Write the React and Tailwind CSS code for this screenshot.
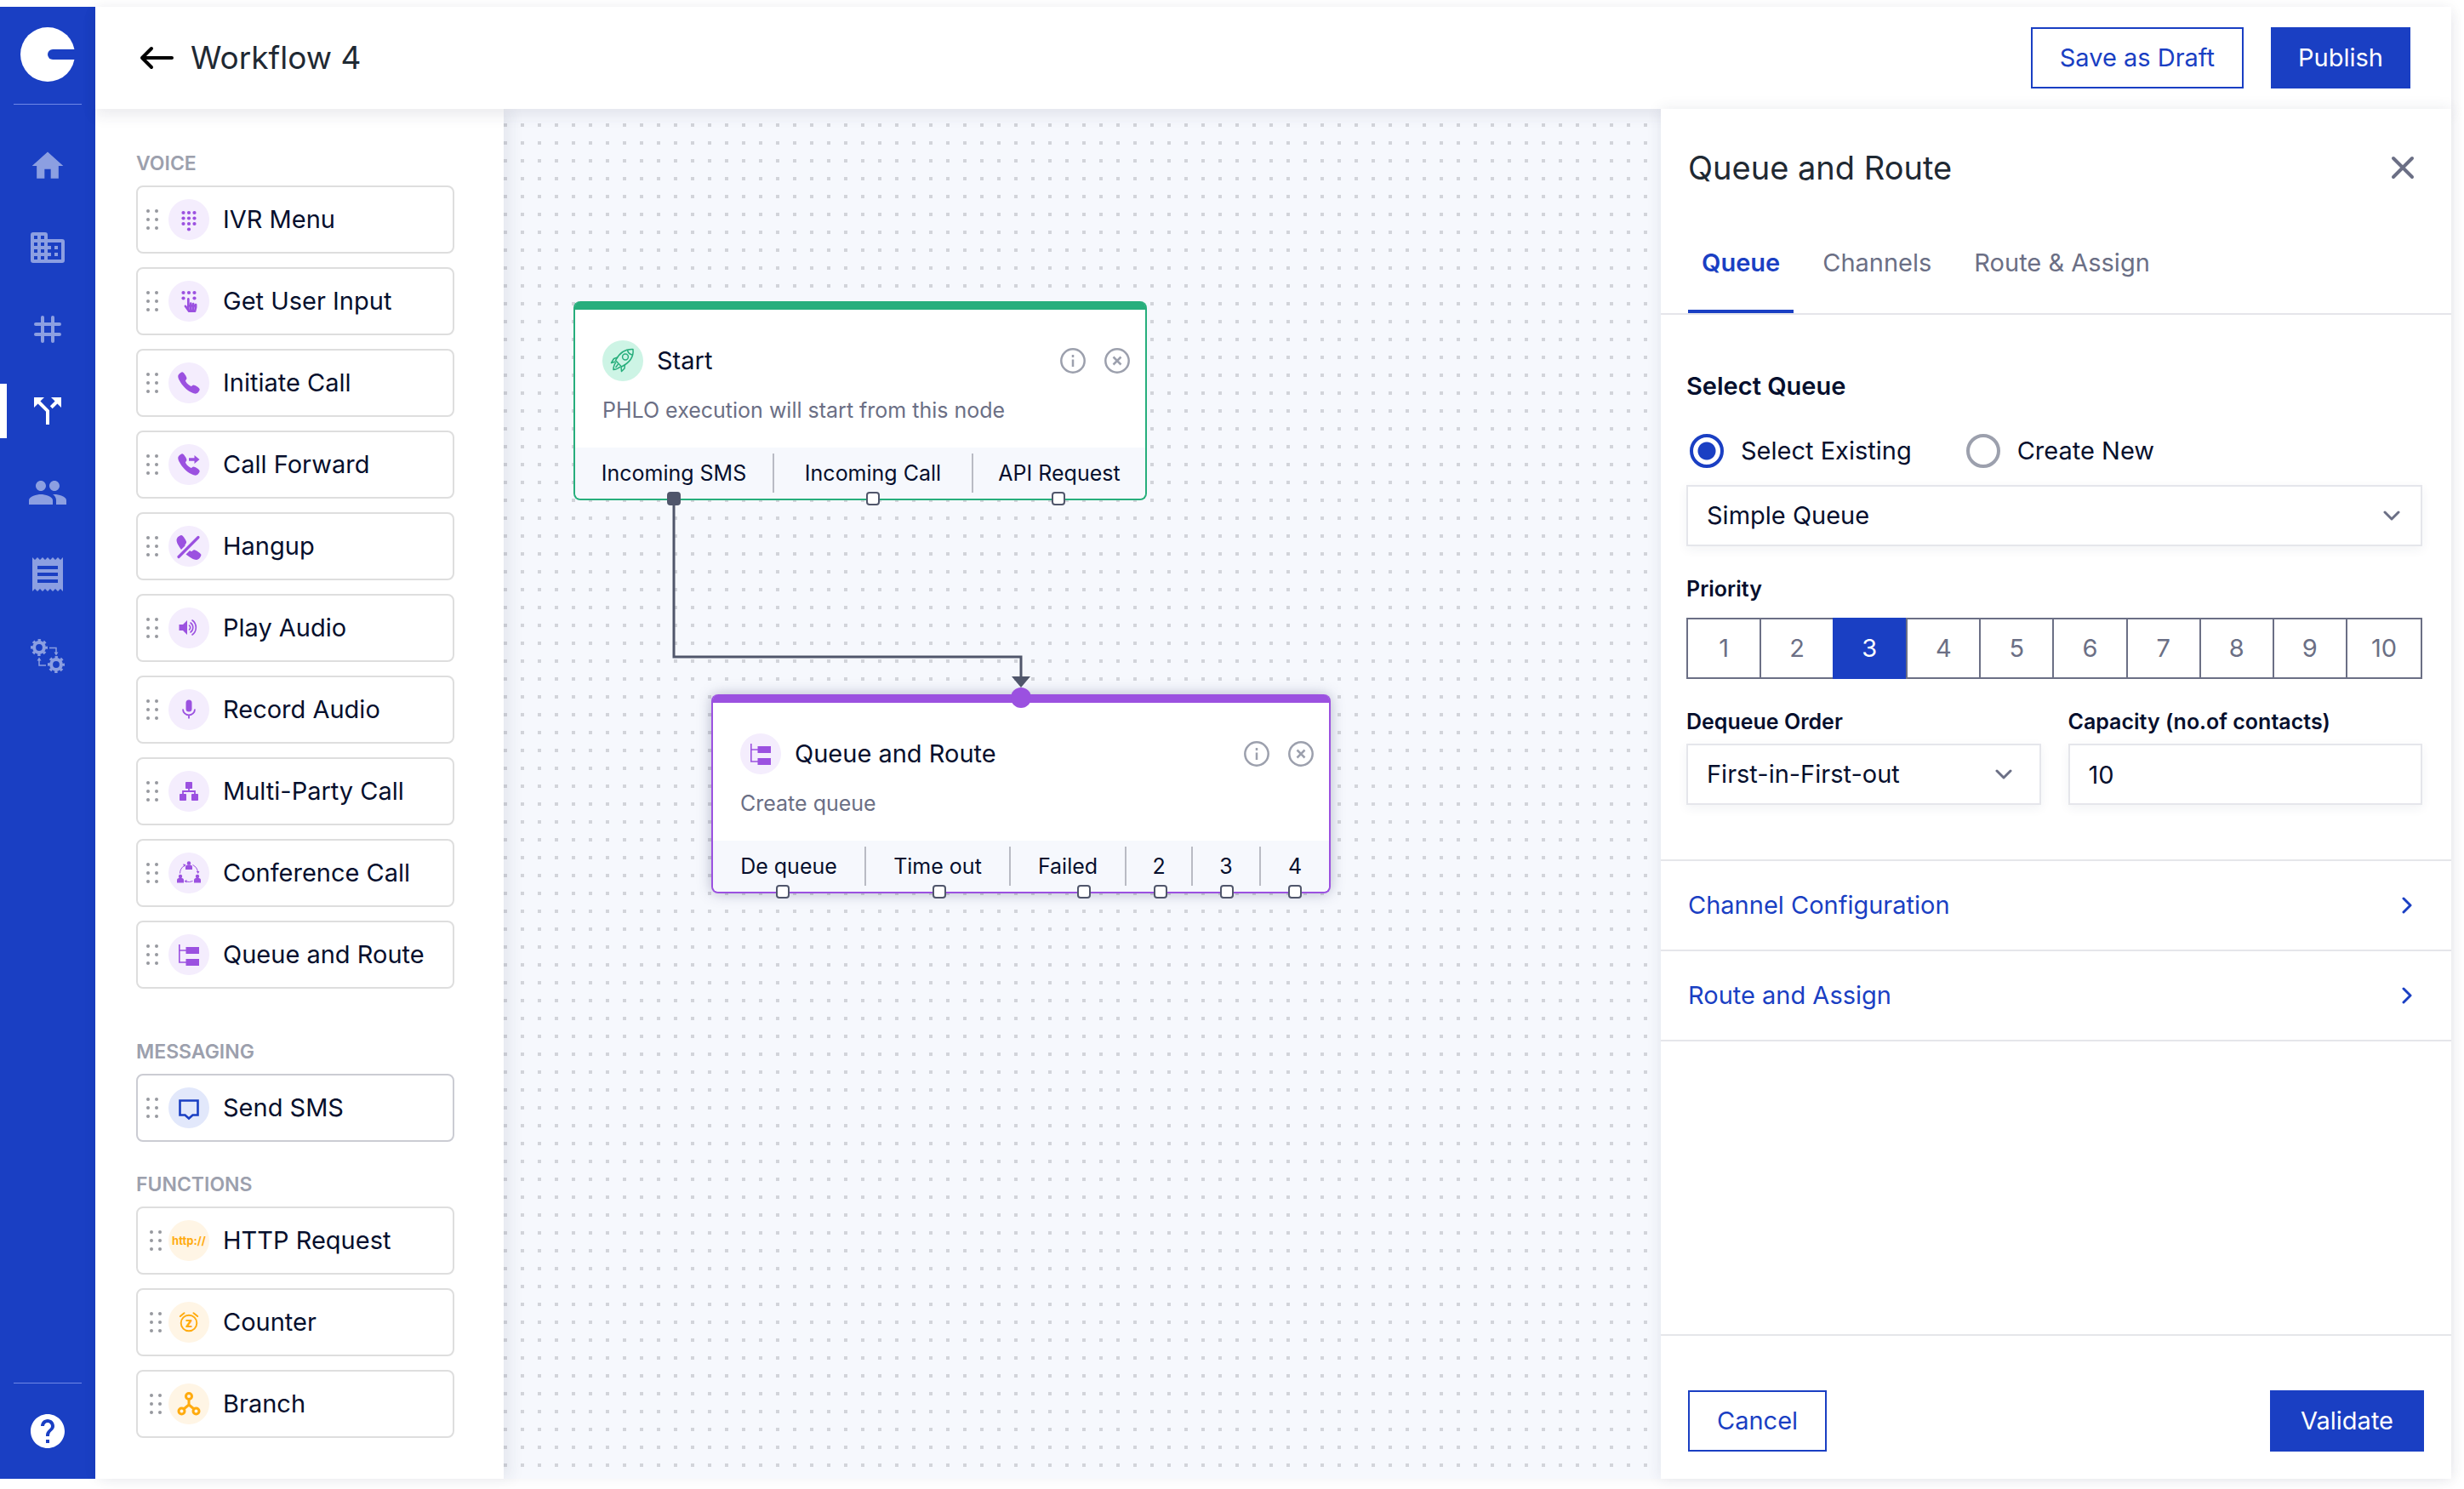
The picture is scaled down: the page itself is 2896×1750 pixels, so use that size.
import { useState } from 'react';
import { MdCallSplit, MdHelp, MdHome, MdPeople, MdReceipt } from 'react-icons/md';
import { IoCall } from 'react-icons/io5';
import { FaHandPointer } from 'react-icons/fa';

function Logo() {
  return (
    <svg viewBox="0 0 64 64" className="h-16 w-16" aria-label="Home">
      <circle cx="32" cy="32" r="32" fill="#fff" />
      <path d="M38 32H66" stroke="#1a3fc3" strokeWidth="12" strokeLinecap="round" />
    </svg>
  );
}

function BuildingIcon() {
  const holes = [];
  [4, 12, 20, 28].forEach((y) => {
    holes.push([4, y], [12, y]);
  });
  return (
    <svg viewBox="0 0 40 36" className="h-9 w-10">
      <path d="M3 0H17a3 3 0 0 1 3 3V8H37a3 3 0 0 1 3 3V33a3 3 0 0 1-3 3H3a3 3 0 0 1-3-3V3a3 3 0 0 1 3-3Z" fill="currentColor" />
      {holes.map(([x, y]) => (
        <rect key={`${x}-${y}`} x={x} y={y} width="4" height="4" fill="#1a3fc3" />
      ))}
      <path d="M20 12H36V32H20V28H24V24H20V20H24V16H20Z" fill="#1a3fc3" />
      <path d="M28 16h4v4h-4zM28 24h4v4h-4z" fill="currentColor" />
    </svg>
  );
}

function HashIcon() {
  return (
    <svg viewBox="0 0 32 32" className="h-8 w-8" stroke="currentColor" strokeWidth="4" strokeLinecap="round">
      <path d="M10 2V30M22 2V30M2 10H30M2 22H30" />
    </svg>
  );
}

function GearsIcon() {
  return (
    <svg viewBox="0 0 40 40" className="h-10 w-10" fill="none" stroke="currentColor">
      {[10, 30].map((c) => (
        <g key={c}>
          <circle cx={c} cy={c} r="5.9" strokeWidth="4" />
          <circle cx={c} cy={c} r="8.5" strokeWidth="3" strokeDasharray="3.338 3.338" strokeDashoffset="1.669" />
        </g>
      ))}
      <path d="M22 10.500H30V16M18 31H10V25" strokeWidth="1.500" />
      <path d="M27.500 15.500h5L30 19.500zM7.500 25.500h5L10 21.500z" fill="currentColor" stroke="none" />
    </svg>
  );
}

function DragHandle() {
  return (
    <svg viewBox="0 0 14 24" className="h-6 w-[14px] shrink-0" fill="#97999f">
      {[2, 12, 22].map((y) => (
        <g key={y}>
          <circle cx="2" cy={y} r="2" />
          <circle cx="12" cy={y} r="2" />
        </g>
      ))}
    </svg>
  );
}

// All of the glyphs below share a 48x48 box, the size of the round badge.
function Glyph({ children }) {
  return (
    <svg viewBox="0 0 48 48" className="h-12 w-12" fill="currentColor">
      {children}
    </svg>
  );
}

function Dots({ rows, cols = [17.5, 24, 30.5], r = 2.1 }) {
  return rows.map((y) => cols.map((x) => <circle key={`${x}-${y}`} cx={x} cy={y} r={r} />));
}

function KeypadIcon() {
  return (
    <Glyph>
      <Dots rows={[16, 22.5, 29]} />
      <circle cx="24" cy="35.500" r="2.100" />
    </Glyph>
  );
}

function UserInputIcon() {
  return (
    <Glyph>
      <Dots rows={[14]} />
      <Dots rows={[20.5]} cols={[17.5, 30.5]} />
      <FaHandPointer x="17.500" y="20" size={17} />
    </Glyph>
  );
}

function CallIcon() {
  return (
    <Glyph>
      <IoCall x="9.500" y="9.500" size={29} />
    </Glyph>
  );
}

function ForwardIcon() {
  return (
    <Glyph>
      <IoCall x="9.500" y="9.500" size={29} />
      <path d="M24 16.200h6.500V13l6 5-6 5v-3.200H24z" />
    </Glyph>
  );
}

function HangupIcon() {
  return (
    <Glyph>
      <IoCall x="7.500" y="9" size={33} />
      <path d="M9 39.500L37 11.500" stroke="#f4edfd" strokeWidth="8" />
      <path d="M12 36.500L35 13.500" stroke="currentColor" strokeWidth="3.200" strokeLinecap="round" />
    </Glyph>
  );
}

function SpeakerIcon() {
  return (
    <Glyph>
      <path d="M12.500 20H17l5-5V32l-5-5H12.500z" />
      <g fill="none" stroke="currentColor" strokeWidth="1.600" strokeLinecap="round">
        <path d="M24.500 21a3.200 3.200 0 0 1 0 5" />
        <path d="M26 18a6.800 6.800 0 0 1 0 11" />
        <path d="M28 15a10.500 10.500 0 0 1 0 17" />
      </g>
    </Glyph>
  );
}

function MicIcon() {
  return (
    <Glyph>
      <rect x="20.500" y="12.500" width="7" height="14" rx="3.500" />
      <path d="M17 23.500a7 7 0 0 0 14 0M24 30.500V34.500" fill="none" stroke="currentColor" strokeWidth="1.800" />
    </Glyph>
  );
}

function SitemapIcon() {
  return (
    <Glyph>
      <rect x="20" y="13" width="8" height="8" rx=".8" />
      <rect x="13" y="27" width="8" height="8" rx=".8" />
      <rect x="27" y="27" width="8" height="8" rx=".8" />
      <path d="M24 20V24M17 28V24H31V28" fill="none" stroke="currentColor" strokeWidth="1.800" />
    </Glyph>
  );
}

function ConferenceIcon() {
  return (
    <Glyph>
      {[[24, 10], [14, 25.5], [34, 25.5]].map(([x, y]) => (
        <g key={x}>
          <circle cx={x} cy={y + 2.5} r="2.200" />
          <path d={`M${x - 4} ${y + 10}v-3a2.500 2.500 0 0 1 2.500-2.500h3a2.500 2.500 0 0 1 2.500 2.500v3z`} />
        </g>
      ))}
      <g fill="none" stroke="currentColor" strokeWidth="1">
        <path d="M13.500 24.500a11 11 0 0 1 5-9" />
        <path d="M28.500 14.500a11 11 0 0 1 6 8.500" />
        <path d="M28.500 33.500a11 11 0 0 1-8 .5" />
      </g>
      <path d="M17 13.500l3.500.5-1.800 3zM32.800 22h3.600l-1.600 3zM21.500 32l-.3 3.400-2.700-2z" />
    </Glyph>
  );
}

function QueueIcon() {
  return (
    <Glyph>
      <path d="M20.500 15H36v8H20.500zM20.500 29H36v8H20.500z" />
      <path d="M12.800 12V33H21M12.800 19H21" fill="none" stroke="currentColor" strokeWidth="1.600" />
    </Glyph>
  );
}

function SmsIcon() {
  return (
    <Glyph>
      <path d="M13.500 15.500H34.500V32.500H28.500L24 36.500L19.500 32.500H13.500Z" fill="none" stroke="currentColor" strokeWidth="2.600" />
    </Glyph>
  );
}

function CounterIcon() {
  return (
    <Glyph>
      <circle cx="24" cy="25" r="9.300" fill="none" stroke="currentColor" strokeWidth="1.900" />
      <path d="M13.800 17l4.700-3.800M34.200 17l-4.700-3.800" stroke="currentColor" strokeWidth="2" strokeLinecap="round" />
      <text x="24" y="29.500" textAnchor="middle" fontSize="15" fontWeight="800">z</text>
    </Glyph>
  );
}

function BranchIcon() {
  return (
    <Glyph>
      <g fill="none" stroke="currentColor" strokeWidth="3">
        <circle cx="24" cy="15" r="3.500" />
        <circle cx="15.500" cy="32.500" r="3.500" />
        <circle cx="32.500" cy="32.500" r="3.500" />
        <path d="M24 19V25M18 30L24 25L30 30" />
      </g>
    </Glyph>
  );
}

function RocketIcon() {
  return (
    <svg viewBox="0 0 48 48" className="h-12 w-12" fill="none" stroke="#27ae7c" strokeWidth="1.500" strokeLinejoin="round">
      <path d="M36 10.500C27 10 20 14.500 15.500 23.500L22.500 31C31.500 26.500 37 19.500 36 10.500Z" />
      <circle cx="27" cy="19.500" r="3.400" />
      <path d="M29.500 11.500C30 14 32.500 16.500 35 17" />
      <path d="M18 20L13.500 21.500L10.500 26.500L15.500 25M26.500 28.500L26 33L22.500 36.500L22 31" />
      <path d="M16 26C13.500 28.500 13 31 13 34.500C16 34 19 33 21 31M18.500 28L15.500 32" />
    </svg>
  );
}

function HttpIcon() {
  return <span className="text-[13px] leading-4 font-bold">http://</span>;
}

const tones = {
  purple: 'bg-[#f4edfd] text-[#9b51e0]',
  blue: 'bg-[#e2e8fb] text-[#1a3fc3]',
  orange: 'bg-[#fff5e5] text-[#ffab0f]',
  green: 'bg-[#cdf4e5] text-[#27ae7c]',
};

function Badge({ tone, icon: Icon }) {
  return (
    <span className={`flex h-12 w-12 shrink-0 items-center justify-center rounded-full ${tones[tone]}`}>
      <Icon />
    </span>
  );
}

const groups = [
  {
    title: 'VOICE',
    tone: 'purple',
    spacing: 'mb-[58px]',
    row: 'pl-[10px] border-[#dedede]',
    handle: 'mr-3',
    items: [
      ['IVR Menu', KeypadIcon],
      ['Get User Input', UserInputIcon],
      ['Initiate Call', CallIcon],
      ['Call Forward', ForwardIcon],
      ['Hangup', HangupIcon],
      ['Play Audio', SpeakerIcon],
      ['Record Audio', MicIcon],
      ['Multi-Party Call', SitemapIcon],
      ['Conference Call', ConferenceIcon],
      ['Queue and Route', QueueIcon],
    ],
  },
  {
    title: 'MESSAGING',
    tone: 'blue',
    spacing: 'mb-[34px]',
    row: 'pl-[10px] border-[#cbccd3]',
    handle: 'mr-3',
    items: [['Send SMS', SmsIcon]],
  },
  {
    title: 'FUNCTIONS',
    tone: 'orange',
    spacing: '',
    row: 'pl-[14px] border-[#dedede]',
    handle: 'mr-2',
    items: [
      ['HTTP Request', HttpIcon],
      ['Counter', CounterIcon],
      ['Branch', BranchIcon],
    ],
  },
];

const navItems = [
  ['Home', <MdHome className="h-11 w-11" />],
  ['Company', <BuildingIcon />],
  ['Numbers', <HashIcon />],
  ['Workflows', <MdCallSplit className="h-12 w-12" />],
  ['Contacts', <MdPeople className="h-12 w-12" />],
  ['Logs', <MdReceipt className="h-12 w-12" />],
  ['Automation', <GearsIcon />],
];

function Sidebar() {
  return (
    <aside className="flex w-28 shrink-0 flex-col items-center bg-[#1a3fc3] pt-6 pb-8">
      <Logo />
      <div className="mt-[26px] h-px w-20 bg-[#6f88e6]" />
      <nav className="mt-10 flex w-full flex-col gap-8">
        {navItems.map(([label, icon]) => (
          <a
            key={label}
            href="#"
            aria-label={label}
            className={`flex h-16 items-center justify-center border-x-8 border-r-transparent ${
              label === 'Workflows' ? 'border-l-white text-white' : 'border-l-transparent text-[#8c9fe1]'
            }`}
          >
            {icon}
          </a>
        ))}
      </nav>
      <div className="mt-auto mb-8 h-px w-20 bg-[#6f88e6]" />
      <a href="#" aria-label="Help" className="text-white">
        <MdHelp className="h-12 w-12" />
      </a>
    </aside>
  );
}

function Header() {
  return (
    <header className="relative z-10 flex h-[120px] shrink-0 items-center bg-white pr-12 pl-[52px] shadow-[0_8px_16px_rgba(40,45,80,0.09)]">
      <button aria-label="Back">
        <svg viewBox="0 0 40 28" className="h-7 w-10" fill="none" stroke="#000" strokeWidth="4" strokeLinecap="round" strokeLinejoin="round">
          <path d="M38 14H3M14 3L3 14L14 25" />
        </svg>
      </button>
      <h1 className="ml-5 text-[37px] leading-[56px] text-[#1f2933]">Workflow 4</h1>
      <div className="ml-auto flex gap-8">
        <button className="h-[72px] border-2 border-[#1a3fc3] bg-white px-8 text-[#1a3fc3]">Save as Draft</button>
        <button className="h-[72px] border-2 border-[#1a3fc3] bg-[#1a3fc3] px-[30px] text-white">Publish</button>
      </div>
    </header>
  );
}

function Palette() {
  return (
    <section className="relative z-[1] w-[480px] shrink-0 bg-white px-12 pt-12 pb-12 shadow-[8px_0_16px_rgba(40,45,80,0.08)]">
      {groups.map((group) => (
        <div key={group.title} className={group.spacing}>
          <h2 className="mb-[10px] text-[23px] leading-8 font-semibold text-[#9ca0ad]">{group.title}</h2>
          <ul className="flex w-[374px] flex-col gap-4">
            {group.items.map(([label, icon]) => (
              <li key={label} className={`flex h-20 cursor-grab items-center rounded-lg border-2 bg-white ${group.row}`}>
                <span className={group.handle}>
                  <DragHandle />
                </span>
                <Badge tone={group.tone} icon={icon} />
                <span className="ml-4 whitespace-nowrap">{label}</span>
              </li>
            ))}
          </ul>
        </div>
      ))}
    </section>
  );
}

// x is the middle of the port, counted from the left edge of the node
const startOutputs = [
  { label: 'Incoming SMS', width: 'w-[234px]', x: 118, linked: true },
  { label: 'Incoming Call', width: 'w-[234px]', x: 352 },
  { label: 'API Request', width: 'flex-1', x: 570 },
];

const queueOutputs = [
  { label: 'De queue', width: 'w-[180px]', x: 84 },
  { label: 'Time out', width: 'w-[170px]', x: 268 },
  { label: 'Failed', width: 'w-[136px]', x: 438 },
  { label: '2', width: 'w-[78px]', x: 528 },
  { label: '3', width: 'w-[80px]', x: 606 },
  { label: '4', width: 'flex-1', x: 686 },
];

function Node({ title, text, tone, icon, outputs, frame, bar }) {
  return (
    <article className={`absolute flex h-[234px] flex-col rounded-lg border-2 border-t-0 bg-white ${frame}`}>
      <div className={`h-[10px] shrink-0 rounded-t-md ${bar}`} />
      <div className="flex-1 px-8 pt-9">
        <div className="flex items-center gap-4">
          <Badge tone={tone} icon={icon} />
          <h3>{title}</h3>
          <div className="-mr-[14px] ml-auto flex gap-[22px] text-[#9ca0ad]">
            <button aria-label="Info">
              <svg viewBox="0 0 30 30" className="h-[30px] w-[30px]" fill="none" stroke="currentColor" strokeWidth="2.500">
                <circle cx="15" cy="15" r="13.700" />
                <path d="M15 13.500V22M15 8V11" />
              </svg>
            </button>
            <button aria-label="Remove">
              <svg viewBox="0 0 30 30" className="h-[30px] w-[30px]" fill="none" stroke="currentColor" strokeWidth="2.500">
                <circle cx="15" cy="15" r="13.700" />
                <path d="M10.500 10.500L19.500 19.500M19.500 10.500L10.500 19.500" />
              </svg>
            </button>
          </div>
        </div>
        <p className="mt-4 text-[25px] leading-9 text-[#6b6f85]">{text}</p>
      </div>
      <div className="flex h-[60px] shrink-0 rounded-b-lg bg-[#f6f8fd] py-[7px]">
        {outputs.map(({ label, width }) => (
          <div key={label} className={`flex items-center justify-center border-[#b9bbc4] text-[25px] leading-8 not-last:border-r-2 ${width}`}>
            {label}
          </div>
        ))}
      </div>
      {outputs.map(({ label, x, linked }) => (
        <span
          key={label}
          className={`absolute -bottom-2 -ml-[10px] h-4 w-4 rounded border-2 border-[#50566b] ${linked ? 'bg-[#50566b]' : 'bg-white'}`}
          style={{ left: x }}
        />
      ))}
    </article>
  );
}

function Canvas() {
  return (
    <main className="relative min-w-0 flex-1 overflow-hidden bg-[#f6f8fd] bg-[conic-gradient(from_270deg_at_4px_4px,#d2d4da_90deg,transparent_0)] bg-size-[20px_21px] bg-position-[0_17px]">
      <Node
        title="Start"
        text="PHLO execution will start from this node"
        tone="green"
        icon={RocketIcon}
        outputs={startOutputs}
        frame="top-[226px] left-[82px] w-[674px] border-[#27ae7c]"
        bar="bg-[#27ae7c]"
      />
      <Node
        title="Queue and Route"
        text="Create queue"
        tone="purple"
        icon={QueueIcon}
        outputs={queueOutputs}
        frame="top-[688px] left-[244px] w-[728px] border-[#9b51e0] shadow-[0_0_16px_rgba(60,66,110,0.35)]"
        bar="bg-[#9b51e0]"
      />
      <svg className="pointer-events-none absolute top-0 left-0 h-[720px] w-[640px]" fill="none">
        <path d="M200 464V644H608V670" stroke="#50566b" strokeWidth="3" />
        <path d="M597 667H619L608 680Z" fill="#50566b" />
        <circle cx="608" cy="692" r="12" fill="#9b51e0" />
      </svg>
    </main>
  );
}

function Chevron({ className }) {
  return (
    <svg viewBox="0 0 20 12" className={className} fill="none" stroke="currentColor" strokeWidth="3" strokeLinecap="round" strokeLinejoin="round">
      <path d="M2 2L10 10L18 2" />
    </svg>
  );
}

const fieldClass =
  'h-[72px] w-full appearance-none rounded-none border-2 border-[#e5e6eb] bg-white px-[22px] shadow-[0_4px_12px_rgba(40,45,80,0.06)]';

function Select({ id, label, chevron, children }) {
  return (
    <div className="relative">
      <select id={id} aria-label={label} className={fieldClass}>
        {children}
      </select>
      <Chevron className={`pointer-events-none absolute top-[30px] h-3 w-5 text-[#6b6f85] ${chevron}`} />
    </div>
  );
}

function Radio({ label, checked, onChange }) {
  return (
    <label className="flex items-center gap-5">
      <input
        type="radio"
        name="queue-source"
        checked={checked}
        onChange={onChange}
        className="h-10 w-10 appearance-none rounded-full border-4 border-[#9ca0ad] checked:border-[#1a3fc3] checked:bg-[radial-gradient(circle,#1a3fc3_10px,transparent_11px)]"
      />
      {label}
    </label>
  );
}

const tabs = ['Queue', 'Channels', 'Route & Assign'];

function ConfigPanel() {
  const [tab, setTab] = useState('Queue');
  const [source, setSource] = useState('existing');
  const [priority, setPriority] = useState(3);

  return (
    <section className="relative z-20 flex w-[929px] shrink-0 flex-col bg-white shadow-[0_0_16px_rgba(40,45,80,0.1)]">
      <div className="flex items-center justify-between pt-[41px] pr-[43px] pl-8">
        <h2 className="text-[38px] leading-[56px] text-[#1f2933]">Queue and Route</h2>
        <button aria-label="Close">
          <svg viewBox="0 0 28 28" className="h-7 w-7" stroke="#6b6f85" strokeWidth="4" strokeLinecap="round">
            <path d="M3 3L25 25M25 3L3 25" />
          </svg>
        </button>
      </div>

      <div className="mt-16 flex gap-[18px] border-b-2 border-[#e5e5ea] px-8">
        {tabs.map((name) => (
          <button
            key={name}
            onClick={() => setTab(name)}
            className={`border-b-4 px-4 pb-[35px] ${
              tab === name ? 'border-[#1a3fc3] font-semibold text-[#1a3fc3]' : 'border-transparent text-[#6b6f85]'
            }`}
          >
            {name}
          </button>
        ))}
      </div>

      <div className="pt-16 pr-[34px] pb-16 pl-[30px]">
        <h3 className="font-semibold">Select Queue</h3>
        <div className="mt-9 flex gap-16 pl-1">
          <Radio label="Select Existing" checked={source === 'existing'} onChange={() => setSource('existing')} />
          <Radio label="Create New" checked={source === 'new'} onChange={() => setSource('new')} />
        </div>
        <div className="mt-5">
          <Select label="Queue" chevron="right-[26px]">
            <option>Simple Queue</option>
          </Select>
        </div>

        <h4 className="mt-[34px] text-[25px] leading-8 font-semibold">Priority</h4>
        <div className="mt-[18px] grid grid-cols-10 divide-x-2 divide-[#6b6f85] border-2 border-[#6b6f85]">
          {[1, 2, 3, 4, 5, 6, 7, 8, 9, 10].map((n) => (
            <button
              key={n}
              onClick={() => setPriority(n)}
              className={priority === n ? '-my-0.5 -ml-0.5 h-[72px] bg-[#1a3fc3] text-white' : 'h-[68px] text-[#6b6f85]'}
            >
              {n}
            </button>
          ))}
        </div>

        <div className="mt-[34px] grid grid-cols-2 gap-8">
          <div>
            <label htmlFor="dequeue" className="mb-[10px] block text-[25px] leading-8 font-semibold">Dequeue Order</label>
            <Select id="dequeue" chevron="right-[34px]">
              <option>First-in-First-out</option>
            </Select>
          </div>
          <div>
            <label htmlFor="capacity" className="mb-[10px] block text-[25px] leading-8 font-semibold">Capacity (no.of contacts)</label>
            <input id="capacity" type="text" defaultValue="10" className={fieldClass} />
          </div>
        </div>
      </div>

      {['Channel Configuration', 'Route and Assign'].map((name, i) => (
        <button
          key={name}
          className={`flex items-center justify-between border-b-2 border-[#e5e6ea] pr-[42px] pl-8 text-[#1a3fc3] ${
            i === 0 ? 'h-[108px] border-t-2' : 'h-[106px]'
          }`}
        >
          {name}
          <Chevron className="h-3 w-5 -rotate-90" />
        </button>
      ))}

      <div className="mt-auto flex justify-between border-t-2 border-[#e5e6ea] px-8 pt-16 pb-8">
        <button className="h-[72px] border-2 border-[#1a3fc3] px-8 text-[#1a3fc3]">Cancel</button>
        <button className="h-[72px] border-2 border-[#1a3fc3] bg-[#1a3fc3] px-[34px] text-white">Validate</button>
      </div>
    </section>
  );
}

export default function App() {
  return (
    <div className="flex min-h-screen bg-white pt-2 pr-[15px] pb-3 font-[Inter,'Open_Sans',sans-serif] text-[29px] leading-10 text-[#060f2d]">
      <Sidebar />
      <div className="flex min-w-0 flex-1 flex-col shadow-[0_0_16px_rgba(40,45,80,0.05)]">
        <Header />
        <div className="flex flex-1">
          <Palette />
          <Canvas />
          <ConfigPanel />
        </div>
      </div>
    </div>
  );
}
